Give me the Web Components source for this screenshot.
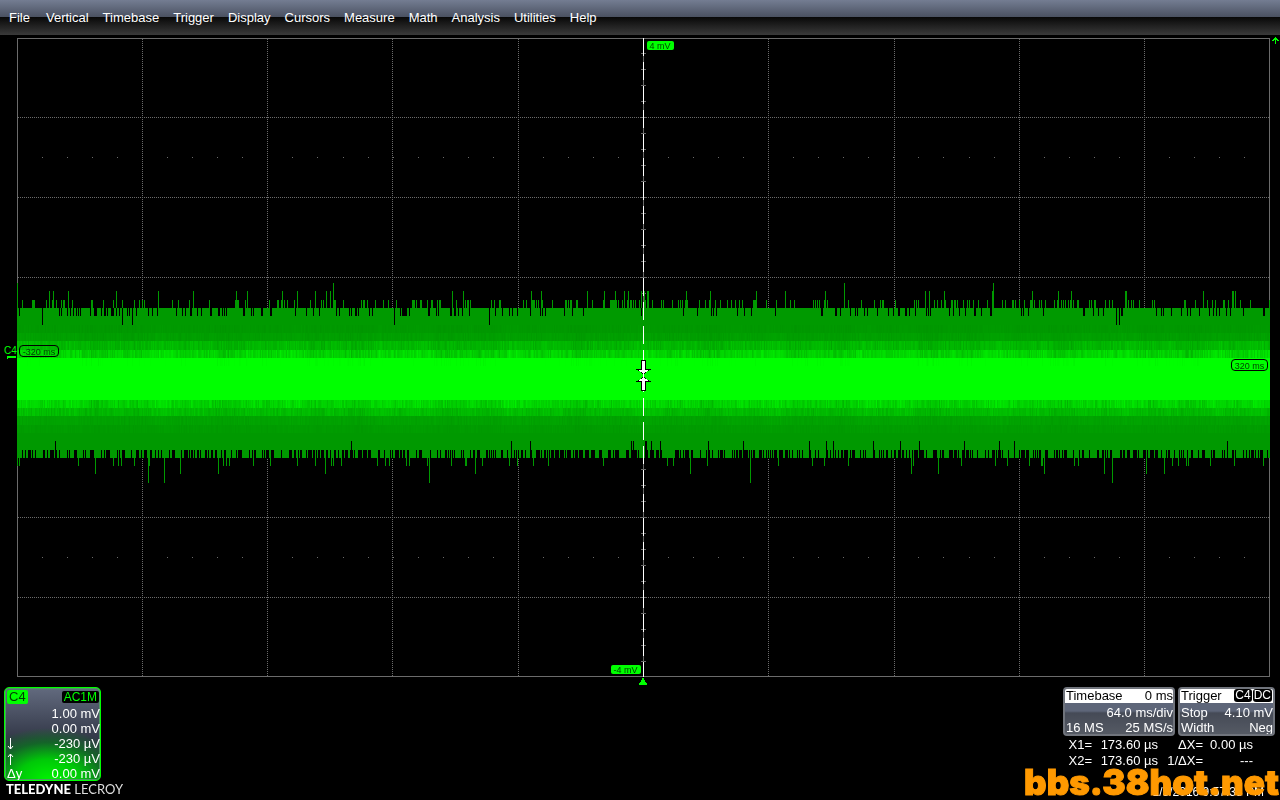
<!DOCTYPE html>
<html lang="en">
<head>
<meta charset="utf-8">
<title>Oscilloscope</title>
<style>
  html, body { margin: 0; height: 100%; background: #000; }
  body { font: 13px/15px "Liberation Sans", Arial, sans-serif; color: #fff; overflow: hidden; }
</style>
</head>
<body>
<scope-app></scope-app>

<script>
function define(name, html, setup) {
  const template = document.createElement('template');
  template.innerHTML = html;
  customElements.define(name, class extends HTMLElement {
    constructor() {
      super();
      this.attachShadow({ mode: 'open' }).append(template.content.cloneNode(true));
    }
    connectedCallback() {
      if (setup) setup(this, this.shadowRoot);
    }
  });
}

define('menu-item', `
  <style>
    :host { display: block; }
    button { all: unset; display: block; font: inherit; line-height: 35px; cursor: default; }
    button:focus-visible { outline: 1px dotted #fff; }
  </style>
  <button type="button"><slot></slot></button>`);

define('menu-bar', `
  <style>
    :host { display: block; background: linear-gradient(#747d92 0, #4a5161 17px, #080808 17px, #3a3a3a 35px); }
    nav { display: flex; gap: 14px; height: 35px; padding-left: 9px; }
    menu-item:first-child { margin-right: 2px; }
  </style>
  <nav aria-label="Main menu">
    <menu-item>File</menu-item><menu-item>Vertical</menu-item><menu-item>Timebase</menu-item>
    <menu-item>Trigger</menu-item><menu-item>Display</menu-item><menu-item>Cursors</menu-item>
    <menu-item>Measure</menu-item><menu-item>Math</menu-item><menu-item>Analysis</menu-item>
    <menu-item>Utilities</menu-item><menu-item>Help</menu-item>
  </nav>`);

/* Trace extremes, as screen columns; the trace itself starts at column 17. */
const TOP_SHORT = [22,32,33,34,46,52,56,61,63,64,72,91,92,103,113,122,134,139,142,144,172,178,189,209,235,237,238,245,269,277,278,281,284,287,294,310,321,323,334,335,343,361,363,364,367,375,383,388,396,412,413,414,416,420,421,427,431,432,437,439,440,456,465,467,468,470,491,494,499,500,523,526,532,533,534,536,538,542,552,565,566,568,570,571,576,577,592,603,610,611,612,613,614,615,616,618,622,624,627,628,630,631,633,635,639,645,648,652,661,663,672,678,680,682,685,687,699,705,709,715,720,727,731,735,739,742,753,754,755,766,776,790,794,813,815,817,819,824,827,848,861,874,880,882,883,895,914,916,918,934,937,941,945,951,952,954,955,957,963,967,969,973,978,987,1002,1005,1012,1013,1015,1019,1024,1030,1031,1034,1039,1041,1045,1054,1057,1061,1063,1065,1068,1070,1073,1077,1078,1089,1091,1094,1095,1105,1109,1112,1128,1131,1133,1139,1152,1154,1184,1185,1195,1207,1212,1215,1223,1224,1228,1240,1250,1269];
const TOP_TALL = [49,53,68,116,158,193,236,247,282,297,315,326,330,452,463,531,541,587,604,615,624,628,641,644,647,648,686,710,756,785,825,925,929,944,992,1032,1058,1071,1125,1126,1203,1232,1233,1235];
const TOP_PEAK = [17,333,844,993];
const TOP_GAP = [19,59,61,67,70,73,76,78,80,90,94,95,96,101,104,105,107,111,112,113,116,119,127,129,136,148,152,157,176,182,185,190,191,197,201,210,211,218,219,222,224,226,243,244,251,253,261,262,270,271,295,306,313,319,336,339,349,351,355,356,358,369,372,400,402,403,404,405,406,409,428,429,436,438,450,451,454,455,458,462,469,495,502,509,512,517,530,540,542,545,564,572,583,641,683,697,711,713,716,737,744,751,775,821,822,835,836,840,850,855,857,864,867,877,888,893,898,899,905,906,909,915,926,928,930,949,953,959,965,974,975,981,990,991,1021,1023,1028,1043,1083,1084,1093,1098,1103,1121,1122,1156,1161,1163,1171,1181,1187,1190,1199,1209,1213,1216,1219,1226,1230,1243,1263,1264];
const TOP_DEEP_GAP = [42,122,132,394,489,1116,1119];
const LOW_GAP = [55,351,511,530,631,633,645,646,651,660,708,743,809,826,833,873,900,919,964,999,1014,1227];
const LOW_SHORT = [17,19,78,113,118,121,134,149,223,226,229,253,270,297,315,331,333,341,377,385,389,406,409,427,451,465,466,482,509,517,533,548,603,667,673,707,778,812,824,848,913,961,995,1007,1029,1041,1042,1074,1078,1172,1178,1186,1188,1210,1234,1263];
const LOW_TALL = [95,180,218,325,475,690,911,938,1044,1104,1146,1164];
const LOW_PEAK = [148,164,429,750,1112];

function drawScope(canvas) {
  const W = canvas.width, H = canvas.height, X0 = 17, Y0 = 38;
  const g = canvas.getContext('2d');
  const box = (color, x, y, w, h) => { g.fillStyle = color; g.fillRect(x, y, w, h); };
  let seed = 38;
  const random = () => (seed = (seed * 16807) % 2147483647) / 2147483647;
  const dim = '#6b6b6b', mid = Math.floor(W / 2);

  // graticule
  for (const x of [125, 250, 375, 501, 751, 877, 1002, 1127])
    for (let y = 1; y < H; y += 2) box(dim, x, y, 1, 1);
  for (const y of [79, 159, 239, 479, 559])
    for (let x = 1; x < W; x += 2) box(dim, x, y, 1, 1);
  for (const y of [119, 519])
    for (let i = 1; i < 50; i++) box(dim, Math.round(i * 25.04), y, 1, 1);
  box(dim, 0, 0, W, 1); box(dim, 0, H - 1, W, 1);
  box(dim, 0, 0, 1, H); box(dim, W - 1, 0, 1, H);
  for (let y = 15; y < H; y += 16) box(dim, mid - 2, y, 5, 1);
  box(dim, mid, 0, 1, H);

  // persistence trace: [top, bottom, mean green, spread]
  const bands = [[308,325,154,0],[325,333,153,3],[333,341,159,5],[341,350,182,14],[350,358,211,22],
    [358,366,260,12],[366,400,255,0],[400,408,211,22],[408,416,186,14],[416,425,162,5],[425,433,156,3],[433,450,153,0]];
  for (let x = 0; x < W; x++) {
    const wave = Math.sin(x / 19) * .3 + Math.sin(x / 7) * .25;
    for (const [top, bottom, mean, spread] of bands) {
      const v = Math.min(255, Math.round(mean + spread * (random() + random() - 1 + wave)));
      box('rgb(0,' + v + ',0)', x, top - Y0, 1, bottom - top);
    }
  }
  const columns = (list, color, top, bottom) =>
    list.forEach(x => box(color, x - X0, top - Y0, 1, bottom - top));
  const edge = '#009900';
  columns(TOP_GAP, '#000', 308, 316);
  columns(TOP_DEEP_GAP, '#000', 308, 325);
  columns(TOP_SHORT, edge, 300, 308);
  columns(TOP_TALL, edge, 291, 308);
  columns(TOP_PEAK, edge, 283, 308);
  for (let x = 0; x < W;) {
    const r = random(), on = r < .5 ? 1 : r < .8 ? 2 : 3 + Math.floor(random() * 5);
    box(edge, x, 450 - Y0, on, 8);
    const gap = random() < .55 ? 1 : 2 + Math.floor(random() * 3);
    box('#000', x + on, 450 - Y0, gap, 8);
    x += on + gap;
  }
  columns(LOW_GAP, '#000', 441, 458);
  columns(LOW_SHORT, edge, 450, 466);
  columns(LOW_TALL, edge, 450, 474);
  columns(LOW_PEAK, edge, 450, 483);

  // dashed cursor
  for (let y = 0; y < H; y += 24) box('#fff', mid, y, 1, 18);
}

define('scope-tag', `
  <style>
    :host { display: block; box-sizing: border-box; border-radius: 2px; background: #0f0; color: #003c00;
            font-size: 9px; line-height: 11px; height: 9px; padding: 0 2px; white-space: nowrap; text-align: center; }
    :host([outline]) { border: 1px solid #000; border-radius: 4px; background: none; height: 12px;
            line-height: 13px; padding: 0; }
  </style>
  <slot></slot>`);

define('scope-grid', `
  <style>
    :host { display: grid; grid-template-columns: 17px minmax(0, 1fr) 10px; padding-top: 3px; min-height: 0; }
    .plot { position: relative; min-height: 0; }
    canvas { display: block; width: 100%; height: 100%; image-rendering: pixelated; }
    .plot > :not(canvas) { position: absolute; }
    .top { left: calc(50% + 3px); top: 3px; width: 27px; }
    .bottom { right: calc(50% + 3px); bottom: 3px; width: 30px; }
    .start { left: 2px; top: calc(50% - 13px); width: 40px; }
    .end { right: 2px; top: calc(50% + 1px); width: 37px; }
    .pointer { left: calc(50% - 8px); top: calc(50% + 2px); }
    .origin { left: calc(50% - 5px); top: calc(100% + 1px); }
    .channel { position: relative; color: #0f0; font-size: 10px; line-height: 12px; }
    .channel div { position: absolute; right: 0; top: calc(50% - 13px); width: 13px; }
    .channel svg { position: absolute; right: 0; top: calc(50% - 2px); }
    .level { display: flex; justify-content: flex-end; align-items: flex-start; }
    .level svg { display: block; overflow: visible; }
  </style>
  <div class="channel"><div>C4</div>
    <svg width="10" height="3" viewBox="0 0 10 3" shape-rendering="crispEdges" aria-hidden="true"><path d="M0 0h9v2H1v1H0z" fill="#0f0"/></svg></div>
  <div class="plot">
    <canvas width="1253" height="639" role="img" aria-label="Channel 4 noise trace"></canvas>
    <scope-tag class="top">4 mV</scope-tag>
    <scope-tag class="bottom">-4 mV</scope-tag>
    <scope-tag outline class="start">-320 ms</scope-tag>
    <scope-tag outline class="end">320 ms</scope-tag>
    <svg class="pointer" width="16" height="32" viewBox="0 0 16 32" shape-rendering="crispEdges" aria-hidden="true">
      <g>
        <path d="M5 0h5v9h5v1h-2v1h-2v1h-1v1H9v1H6v-1H5v-1H4v-1H2v-1H0V9h5z" fill="#000"/>
        <path d="M6 1h3v9h3v1h-1v1H9v1H8v1H7v-1H6v-1H4v-1H3v-1h3z" fill="#fff"/>
      </g>
      <g transform="matrix(1 0 0 -1 0 31)">
        <path d="M5 0h5v9h5v1h-2v1h-2v1h-1v1H9v1H6v-1H5v-1H4v-1H2v-1H0V9h5z" fill="#000"/>
        <path d="M6 1h3v9h3v1h-1v1H9v1H8v1H7v-1H6v-1H4v-1H3v-1h3z" fill="#fff"/>
      </g>
    </svg>
    <svg class="origin" width="8" height="7" viewBox="0 0 8 7" shape-rendering="crispEdges" aria-hidden="true">
      <path d="M3 0h2v2h1v2h1v1h1v2H0V5h1V4h1V2h1z" fill="#0f0"/></svg>
  </div>
  <div class="level"><svg width="8" height="7" viewBox="0 0 8 7" shape-rendering="crispEdges" aria-hidden="true">
    <path d="M3 -1h1v1h1v1h1v1h1v1H5V2H4v4H3V2H2v1H0V2h1V1h1V0h1z" fill="#0f0"/></svg></div>`,
  (host, root) => drawScope(root.querySelector('canvas')));

define('channel-box', `
  <style>
    :host { display: block; box-sizing: border-box; width: 97px; height: 94px; overflow: hidden;
      border: 1px solid #0f0; border-radius: 5px; box-shadow: inset 0 0 0 1px #4d9a62; padding: 1px 0 0 2px;
      background: radial-gradient(80px 52px at 46% 100%, #00f400, #00c808 40%, rgba(0, 130, 20, .6) 72%, transparent),
        linear-gradient(#626a7e, #333848 55%, #2d3442); }
    header { display: flex; justify-content: space-between; align-items: center; height: 15px; padding-right: 1px; }
    b { font-weight: normal; background: #0f0; color: #003c00; border-radius: 2px; height: 14px; padding: 0 2px; line-height: 14px; }
    i { font-style: normal; font-size: 12px; line-height: 12px; height: 12px; background: #000; color: #0f0; border-radius: 2px; padding: 0 2px; }
    dl { margin: 0; }
    dl div { display: flex; justify-content: space-between; height: 15px; line-height: 19px; }
    dd { margin: 0 0 0 auto; }
    svg { display: block; margin: 4px 0 0; }
  </style>
  <header><b>C4</b><i>AC1M</i></header>
  <dl>
    <div><dt></dt><dd>1.00 mV</dd></div>
    <div><dt></dt><dd>0.00 mV</dd></div>
    <div><dt><svg width="7" height="12" viewBox="0 0 7 12" aria-label="minimum"><path d="M3.5 0v11M1 8l2.500 3L6 8" fill="none" stroke="#fff"/></svg></dt><dd>-230 µV</dd></div>
    <div><dt><svg width="7" height="12" viewBox="0 0 7 12" aria-label="maximum"><path d="M3.5 12V1M1 4l2.500-3L6 4" fill="none" stroke="#fff"/></svg></dt><dd>-230 µV</dd></div>
    <div><dt>Δy</dt><dd>0.00 mV</dd></div>
  </dl>`);

define('info-box', `
  <style>
    :host { display: block; box-sizing: border-box; height: 49px; overflow: hidden; border: 2px solid #70747c;
      border-radius: 4px; background: linear-gradient(#5e6679 0, #5e6679 22px, #454a56 24px, #555a64); }
    header { display: flex; justify-content: space-between; height: 14px; line-height: 14px; background: #fff; color: #000; padding-left: 1px; }
    ::slotted(div) { display: flex; justify-content: space-between; height: 15px; line-height: 20px; padding-left: 1px; }
    ::slotted(span) { display: block; }
    slot[name=head] { display: contents; }
  </style>
  <header><slot name="head"></slot></header>
  <slot></slot>`);

define('input-tag', `
  <style>
    :host { display: block; height: 13px; padding: 0 1px; margin: 0 1px 0 0; border-radius: 3px;
      background: #000; color: #fff; font-size: 12px; line-height: 12px; }
  </style>
  <slot></slot>`);

define('cursor-readout', `
  <style>
    :host { display: block; }
    table { border-collapse: collapse; table-layout: fixed; width: 190px; line-height: 16px; }
    th, td { padding: 0; font-weight: normal; text-align: right; white-space: nowrap; }
    th { width: 45px; }
    td { width: 50px; }
    th:first-child { width: 29px; }
    th:first-child + td { width: 66px; }
  </style>
  <table>
    <tr><th scope="row">X1=</th><td>173.60 µs</td><th scope="row">ΔX=</th><td>0.00 µs</td></tr>
    <tr><th scope="row">X2=</th><td>173.60 µs</td><th scope="row">1/ΔX=</th><td>---</td></tr>
  </table>`);

define('brand-mark', `
  <style>
    :host { display: block; font: 13px/16px Lato, sans-serif; white-space: nowrap; padding-left: 2px; color: #ddd; }
    b { font-weight: 900; color: #fff; }
  </style>
  <b>TELEDYNE</b> LECROY`);

define('status-bar', `
  <style>
    :host { display: flex; justify-content: space-between; align-items: flex-start; position: relative;
      height: 113px; padding: 10px 5px 0 4px; }
    .right { width: 212px; }
    .boxes { display: grid; grid-template-columns: 112px 97px; gap: 3px; }
    .tags { display: flex; }
    cursor-readout { margin-top: 1px; }
    time { position: absolute; right: 16px; bottom: 1px; font-size: 12px; line-height: 14px; }
    .site { position: absolute; right: 1px; bottom: 0; font: 900 35px/36px Inter, sans-serif; color: #f90;
      -webkit-text-stroke: 1px #f90; }
  </style>
  <div><channel-box></channel-box><brand-mark></brand-mark></div>
  <div class="right">
    <div class="boxes">
      <info-box>
        <span slot="head">Timebase</span><span slot="head">0 ms</span>
        <div><span></span><span>64.0 ms/div</span></div>
        <div><span>16 MS</span><span>25 MS/s</span></div>
      </info-box>
      <info-box>
        <span slot="head">Trigger</span><span slot="head" class="tags"><input-tag>C4</input-tag><input-tag>DC</input-tag></span>
        <div><span>Stop</span><span>4.10 mV</span></div>
        <div><span>Width</span><span>Neg</span></div>
      </info-box>
    </div>
    <cursor-readout></cursor-readout>
  </div>
  <time>1/5/2016 9:57:38 PM</time>
  <div class="site">bbs.38hot.net</div>`);

define('scope-app', `
  <style>
    :host { display: grid; grid-template-rows: auto minmax(0, 1fr) auto; height: 100vh; }
  </style>
  <menu-bar></menu-bar>
  <scope-grid></scope-grid>
  <status-bar></status-bar>`);
</script>
</body>
</html>
